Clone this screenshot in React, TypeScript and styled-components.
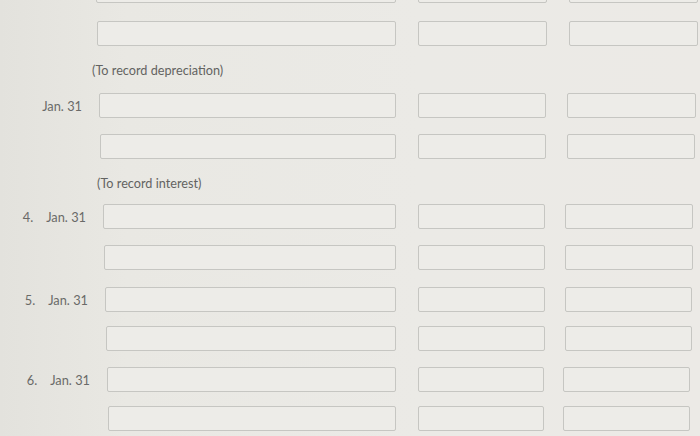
import React from "react";
import styled, { createGlobalStyle } from "styled-components";

const Global = createGlobalStyle`
  html, body { margin: 0; padding: 0; background: #e8e7e2; }
  body { width: 700px; height: 436px; overflow: hidden; font-family: Lato, "Open Sans", sans-serif; }
`;

const Page = styled.div`
  width: 700px;
  height: 436px;
  overflow: hidden;
  background: linear-gradient(90deg, #e3e2dd 0%, #e9e8e3 18%, #ebeae6 60%, #eceae6 100%);
  display: flex;
  flex-direction: column;
`;

const Row = styled.div<{ $space: number; $lift?: number }>`
  display: flex;
  align-items: center;
  height: 25px;
  flex-shrink: 0;
  margin-top: ${(p) => (p.$lift ? -p.$lift : 0)}px;
  margin-bottom: ${(p) => p.$space}px;
`;

const Label = styled.div<{ $shift: number }>`
  width: ${(p) => p.$shift}px;
  flex-shrink: 0;
  box-sizing: border-box;
  padding-right: 17px;
  display: flex;
  justify-content: flex-end;
  font-size: 12.8px;
  color: #6a6a68;
  white-space: nowrap;
`;

const Num = styled.span`
  margin-right: 13px;
`;

const Field = styled.div`
  height: 25px;
  box-sizing: border-box;
  border: 1.5px solid #c6c6c2;
  border-radius: 2px;
  background: #edece8;
  flex-shrink: 0;
`;

const AccountField = styled(Field)<{ $shift: number }>`
  width: ${(p) => 396 - p.$shift}px;
`;

const AmountField = styled(Field)<{ $gap: number; $width: number }>`
  width: ${(p) => p.$width}px;
  margin-left: ${(p) => p.$gap}px;
`;

const Note = styled.div<{ $indent: number; $space: number }>`
  height: 16px;
  line-height: 16px;
  flex-shrink: 0;
  padding-left: ${(p) => p.$indent}px;
  margin-bottom: ${(p) => p.$space}px;
  font-size: 12.7px;
  color: #636361;
`;

type Line = {
  kind: "row";
  shift: number;
  space: number;
  num?: string;
  date?: string;
  lift?: number;
} | { kind: "note"; text: string; indent: number; space: number };

const lines: Line[] = [
  { kind: "row", shift: 96, space: 18, lift: 22 },
  { kind: "row", shift: 97, space: 16 },
  { kind: "note", text: "(To record depreciation)", indent: 92, space: 15 },
  { kind: "row", shift: 99, space: 16, date: "Jan. 31" },
  { kind: "row", shift: 100, space: 16 },
  { kind: "note", text: "(To record interest)", indent: 97, space: 13 },
  { kind: "row", shift: 103, space: 16, num: "4.", date: "Jan. 31" },
  { kind: "row", shift: 104, space: 17 },
  { kind: "row", shift: 105, space: 14, num: "5.", date: "Jan. 31" },
  { kind: "row", shift: 106, space: 16 },
  { kind: "row", shift: 107, space: 14, num: "6.", date: "Jan. 31" },
  { kind: "row", shift: 108, space: 0 },
];

export default function App() {
  return (
    <>
      <Global />
      <Page>
        {lines.map((l, i) => {
          if (l.kind === "note") {
            return (
              <Note key={i} $indent={l.indent} $space={l.space}>
                {l.text}
              </Note>
            );
          }
          const t = Math.max(0, l.shift - 97);
          const debitW = 129 - Math.round(t / 4);
          const creditGap = 22 - Math.round(t / 4);
          const creditW = 129 - Math.round(t / 5);
          return (
            <Row key={i} $space={l.space} $lift={l.lift}>
              <Label $shift={l.shift}>
                {l.num ? <Num>{l.num}</Num> : null}
                {l.date ?? ""}
              </Label>
              <AccountField $shift={l.shift} />
              <AmountField $gap={22} $width={debitW} />
              <AmountField $gap={creditGap} $width={creditW} />
            </Row>
          );
        })}
      </Page>
    </>
  );
}
